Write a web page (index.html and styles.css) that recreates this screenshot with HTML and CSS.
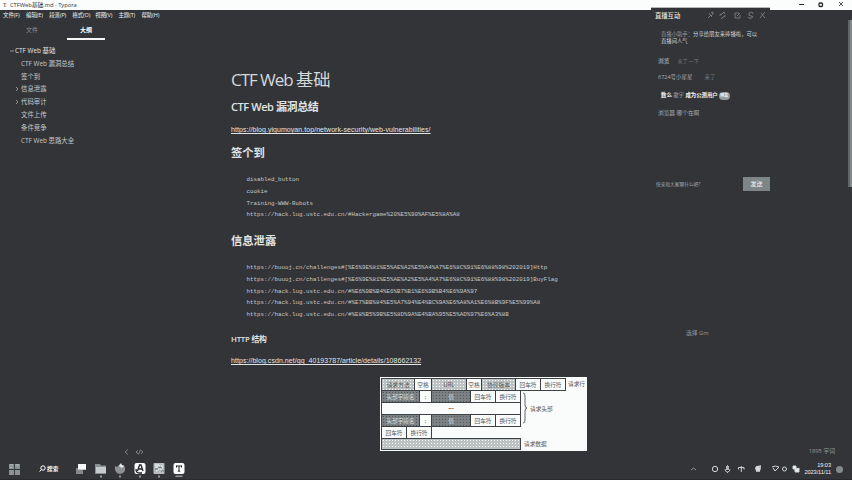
FILE: index.html
```html
<!DOCTYPE html>
<html lang="zh-CN">
<head>
<meta charset="utf-8">
<title>CTFWeb基础.md - Typora</title>
<link rel="stylesheet" href="styles.css">
</head>
<body>
<div class="screen">
  <header class="titlebar">
    <span class="app-mark">T</span><span class="title">CTFWeb基础.md - Typora</span>
    <svg class="controls" width="60" height="10" viewBox="0 0 60 10" fill="none" stroke="#222428"><path d="M6 4.500h5"/><rect x="26" y="3" width="3.500" height="3.500" rx="1" stroke-width="1.300"/><path d="M46 2l4 4M50 2l-4 4" stroke-width=".8"/></svg>
  </header>
  <nav class="menu"><span>文件(F)</span><span>编辑(E)</span><span>段落(P)</span><span>格式(O)</span><span>视图(V)</span><span>主题(T)</span><span>帮助(H)</span></nav>
  <main class="workspace">
    <aside class="sidebar">
      <div class="tabs"><span class="tab">文件</span><span class="tab active">大纲</span></div>
      <ul class="outline">
        <li class="root"><svg class="mark" viewBox="0 0 5 5"><path d="M0 3h4"/></svg>CTF Web 基础</li>
        <li>CTF Web 漏洞总结</li>
        <li>签个到</li>
        <li class="closed"><svg class="mark" viewBox="0 0 5 5"><path d="M1 1l2 2-2 2"/></svg>信息泄露</li>
        <li class="closed"><svg class="mark" viewBox="0 0 5 5"><path d="M1 1l2 2-2 2"/></svg>代码审计</li>
        <li>文件上传</li>
        <li>条件竞争</li>
        <li>CTF Web 思路大全</li>
      </ul>
      <svg class="side-tools" width="22" height="8" viewBox="0 0 22 8"><path d="M5 1.500L2 4l3 2.500M15 2.500L13 4l2 2M18 2.500L20 4l-2 2M17.500 1.500l-2 5"/></svg>
    </aside>
    <article class="document">
      <h1>CTF Web <span>基础</span></h1>
      <h2 class="first">CTF Web 漏洞总结</h2>
      <p class="link blog"><a>https://blog.yigumoyan.top/network-security/web-vulnerabilities/</a></p>
      <h2 class="second">签个到</h2>
      <pre class="tasks">disabled_button
cookie
Training-WWW-Robots
https://hack.lug.ustc.edu.cn/#Hackergame%20%E5%90%AF%E5%8A%A8</pre>
      <h2 class="third">信息泄露</h2>
      <pre class="leaks">https://buuoj.cn/challenges#[%E6%9E%81%E5%AE%A2%E5%A4%A7%E6%8C%91%E6%88%98%202019]Http
https://buuoj.cn/challenges#[%E6%9E%81%E5%AE%A2%E5%A4%A7%E6%8C%91%E6%88%98%202019]BuyFlag
https://hack.lug.ustc.edu.cn/#%E6%9B%B4%E6%B7%B1%E6%9B%B4%E6%9A%97
https://hack.lug.ustc.edu.cn/#%E7%BB%84%E5%A7%94%E4%BC%9A%E6%A8%A1%E6%8B%9F%E5%99%A8
https://hack.lug.ustc.edu.cn/#%E8%B5%9B%E5%8D%9A%E4%BA%95%E5%AD%97%E6%A3%8B</pre>
      <h3>HTTP 结构</h3>
      <p class="link csdn"><a>https://blog.csdn.net/qq_40193787/article/details/108662132</a></p>
      <div class="diagram">
        <div class="row request"><span class="light">请求方法</span><span>空格</span><span class="light">URL</span><span>空格</span><span class="light">协议版本</span><span>回车符</span><span>换行符</span><em>请求行</em></div>
        <div class="middle">
          <div class="fields">
            <div class="row header"><span class="dark">头部字段名</span><span>:</span><span class="dark">值</span><span>回车符</span><span>换行符</span></div>
            <div class="row dots"><span>...</span></div>
            <div class="row header"><span class="dark">头部字段名</span><span>:</span><span class="dark">值</span><span>回车符</span><span>换行符</span></div>
          </div>
          <svg class="brace" width="6" height="32" viewBox="0 0 6 32"><path d="M1 1q2 0 2 3v9q0 3 2 3q-2 0-2 3v9q0 3-2 3"/></svg>
          <em>请求头部</em>
        </div>
        <div class="row blank"><span>回车符</span><span>换行符</span></div>
        <div class="row body"><span class="light"></span><em>请求数据</em></div>
      </div>
    </article>
    <div class="right">
      <span class="select">选择 Gm</span>
      <span class="count">1895 字词</span>
    </div>
    <div class="scroll"></div>
  </main>
  <footer class="taskbar">
    <svg class="start" width="11" height="11" viewBox="0 0 12 12"><path fill="#8b9293" d="M0 0h5.500v5.500H0zM6.500 0H12v5.500H6.500zM0 6.500h5.500V12H0zM6.500 6.500H12V12H6.500z"/><path d="M1 1h3M7 1h4M1 4h2" stroke="#c0c5c6"/></svg>
    <span class="search"><svg width="7" height="8" viewBox="0 0 7 8" fill="none" stroke="#fff"><circle cx="4" cy="3" r="2.200"/><path d="M2.400 4.600L.6 6.600"/></svg>搜索</span>
    <div class="apps">
      <svg viewBox="0 0 12 16"><path fill="#848a8b" d="M1 6h7v6H1z"/><path fill="#f7f9f9" d="M3 2h8v6H3z"/><path fill="#c5caca" d="M3 7h8v1H3z"/></svg>
      <svg viewBox="0 0 12 16"><path fill="#8b9192" d="M0 2h5l1 1.500h5V12H0z"/><path fill="#c6cbcb" d="M1 5h10v6H1z"/><path class="run" d="M5 13.500h2v2H5z"/></svg>
      <svg viewBox="0 0 12 16"><path fill="#8c9293" d="M1 4l2 1 3-3 2 2 2-1 1 3q1 5-5 6Q0 11 1 4z"/><path fill="#e8ebeb" d="M5 4l2-3 1 2 2 1-2 2z"/><path class="run" d="M5 13.500h2v2H5z"/></svg>
      <svg viewBox="0 0 12 16"><rect y="1" x=".5" width="11" height="11" rx="2" fill="#fafbfb"/><path d="M3.500 9l2-6h1.500L9 9M4 7h4M2 7q0 4 3 4h3" fill="none" stroke="#222428" stroke-width="1.300"/><path class="run" d="M5 13.500h2v2H5z"/></svg>
      <svg viewBox="0 0 12 16"><rect y="1" x=".5" width="11" height="11" rx="1" fill="#b7bdbe"/><path d="M2 3h4v2H2M6 5l4 5M9 3v4M3 9l3-2" fill="none" stroke="#f6f8f8"/><path d="M5 5l4 1M2 7h3M8 9h3" stroke="#626869"/><path class="run" d="M5 13.500h2v2H5z"/></svg>
      <svg viewBox="0 0 12 16"><rect y="1" x=".5" width="11" height="11" rx="2" fill="#fafbfb"/><path d="M3.500 4h5M6 4v5M4.800 9.200h2.400M3.500 3.500v2M8.500 3.500v2" stroke="#222428"/><path class="run" d="M2.500 13.500h7V15h-7z"/></svg>
    </div>
    <svg class="tray" width="112" height="12" viewBox="0 0 112 12" fill="none" stroke="#d3d7d7"><path d="M2 7l2.500-2L7 7" stroke="#8b9192"/><circle cx="26" cy="6" r="2.700"/><path d="M37.500 3v4M39.500 3v4M38.500 2v5M36 6q0 3 2.500 3T41 6M38.500 9v1" stroke-width=".8"/><path d="M49.500 4.500H55M52.300 3v6M49.500 4.500v2M55 4.500v2"/><path d="M67 4l5-1M66 5h6M66.500 6.500h5M67 8h4" stroke-width="1.300"/><path d="M83 4q3.500-2 7 0M84 5l2 3 4-4"/><circle cx="95.500" cy="6" r="2"/><path d="M104 3h3v3l3-1v4h-4V6h-2z" fill="#eef0f0"/></svg>
    <div class="clock"><span>19:03</span><span>2023/11/11</span></div>
    <i class="notice"></i>
  </footer>
  <section class="chat">
    <div class="chat-head"><b>直播互动</b>
      <svg width="62" height="9" viewBox="0 0 62 9"><path d="M2 7l3-3M3 2l3 4M5 2l2-1v2L5 5M14 5q-1-2 2-2l2-2 1 2M19 4q1 2-2 2l-2 2M33 2h-4v5h5V4M31 5l3-3M43 2q4-2 4 1M43 2q-1 3 2 3t1 2q-4 1-4-1M54 7l5-6M55 2l4 5"/></svg>
    </div>
    <p class="notice-text"><span>直播小助手：</span>分享给朋友来捧播啦，可以<br>直播间人气</p>
    <p class="msg one"><b>浏览</b><span>来了 一下</span></p>
    <p class="msg two">6724号小星星<span>来了</span></p>
    <p class="msg three">数么 <span>歌字</span> 成为公测用户<i>网友</i></p>
    <p class="msg four">浏览器 哪个在啊</p>
    <div class="reply"><span>快来和大家聊什么吧?</span><button>发送</button></div>
  </section>
</div>
</body>
</html>
```
FILE: styles.css
```css
* { box-sizing: border-box; }
body { margin: 0; background: #333438; color: #d5d9da; font-family: "Open Sans", "Noto Sans CJK SC", sans-serif; }
h1, h2, h3, p, ul, pre { margin: 0; padding: 0; }
.screen { position: relative; width: 852px; height: 480px; overflow: hidden; display: flex; flex-direction: column; background: #333438; }
.titlebar { display: flex; height: 10px; flex: none; background: #fbfdfd; color: #303236; font-size: 5.8px; line-height: 10px; letter-spacing: -.05px; }
.app-mark { width: 10px; padding-left: 3px; font-family: "Liberation Serif", serif; }
.controls { margin-left: auto; margin-right: -1px; }
.menu { display: flex; height: 10px; flex: none; gap: 5.4px; padding-left: 3px; font-size: 5.5px; line-height: 10px; color: #f0f3f3; letter-spacing: -.12px; }
.menu span { width: 17.7px; white-space: nowrap; }
.workspace { display: flex; height: 439px; flex: none; }
.sidebar { width: 210px; display: flex; flex-direction: column; }
.tabs { display: flex; padding-left: 13px; }
.tab { width: 38px; height: 20px; margin-right: 16px; text-align: center; font-size: 6px; line-height: 21px; color: #8c9293; }
.tab.active { color: #fff; font-weight: 700; border-bottom: 2px solid #f5f7f7; }
.outline { list-style: none; padding-top: 5px; font-size: 6.4px; line-height: 12.8px; color: #c3c8c9; }
.outline li { height: 12.8px; padding-left: 21px; white-space: nowrap; }
.outline .root { padding-left: 10px; color: #e3e6e6; }
.outline .closed { padding-left: 15px; }
.mark { width: 5px; height: 5px; margin-right: 1px; fill: none; stroke: #a5aaab; stroke-width: .8; }
.outline .root .mark { margin-right: 0; }
.side-tools { margin: auto 0 3px 123px; fill: none; stroke: #8e9495; stroke-width: .8; }
.document { width: 440px; padding: 45px 0 0 21px; overflow: hidden; }
h1 { height: 30px; font-size: 17px; line-height: 29px; font-weight: 400; letter-spacing: -1.05px; white-space: nowrap; }
h1 span { font-size: 17.3px; letter-spacing: 0; }
h2 { font-size: 11.3px; font-weight: 700; color: #e0e4e4; white-space: nowrap; }
h2.first { height: 24px; line-height: 24px; font-size: 11px; letter-spacing: -.42px; font-weight: 600; }
.link { height: 20px; font: 7px/21px "Liberation Sans", sans-serif; }
.link a { color: #e1e5e5; text-decoration: underline; white-space: nowrap; }
.blog { letter-spacing: .055px; }
h2.second { height: 29px; line-height: 28px; }
pre { padding-left: 15.500px; font: 5.840px/11.600px "Liberation Mono", "DejaVu Sans Mono", monospace; color: #c4c9ca; }
.tasks { height: 59px; padding-top: 6.400px; }
h2.third { height: 29px; line-height: 28px; }
.leaks { height: 72px; padding-top: 6.400px; }
h3 { height: 23px; font-size: 7.8px; line-height: 23px; letter-spacing: -.2px; color: #e0e4e4; font-weight: 600; }
.csdn { height: 26px; letter-spacing: .05px; line-height: 20px; }
.diagram { width: 207px; height: 74px; margin-left: 149px; padding: 1px; background: #fafcfc; color: #53585b; font: 5.700px/11px "Noto Sans CJK SC", sans-serif; }
.row { display: flex; height: 12px; }
.row span { flex: none; border: solid #3d4044; border-width: 1px 1px 0 0; text-align: center; white-space: nowrap; overflow: hidden; }
.row span:first-child { border-left-width: 1px; }
.diagram em { font-style: normal; padding-left: 3px; white-space: nowrap; }
.light { background: radial-gradient(#fafcfc .6px, #bcc1c1 .8px) 0 0 / 3px 3px; }
.row .dark { background: radial-gradient(#53585a .6px, #7c8284 .8px) 0 0 / 3px 3px; color: #d8dddd; }
.request span { border-bottom-width: 1px; height: 13px; }
.request span:nth-child(1) { width: 34px; }
.request span:nth-child(2) { width: 17px; }
.request span:nth-child(3) { width: 35px; }
.request span:nth-child(4) { width: 15px; }
.request span:nth-child(5) { width: 34px; }
.request span:nth-child(6) { width: 25px; }
.request span:nth-child(7) { width: 25px; }
.request em { padding-left: 2px; }
.middle { display: flex; height: 36px; align-items: center; }
.fields { width: 140px; }
.header span:nth-child(1) { width: 39px; }
.header span:nth-child(2) { width: 12px; }
.header span:nth-child(3) { width: 39px; }
.header span:nth-child(4) { width: 25px; }
.header span:nth-child(5) { width: 25px; }
.dots span { width: 140px; line-height: 7px; font-weight: 700; color: #303236; }
.brace { margin-left: 1px; fill: none; stroke: #3d4044; stroke-width: .8; }
.middle em { padding-left: 2px; }
.blank span { width: 25.500px; }
.blank span:first-child { width: 26px; }
.blank span:last-child { width: 25px; }
.fields .header:last-child, .blank { position: relative; }
.blank::after { content: ""; width: 89px; border-top: 1px solid #3d4044; }
.body span { width: 140px; height: 12px; border-bottom-width: 1px; }
.right { width: 198px; display: flex; flex-direction: column; justify-content: space-between; padding: 308px 13px 2px 36px; font-size: 5.800px; line-height: 11px; color: #92989a; }
.count { align-self: flex-end; }
.scroll { width: 4px; height: 167px; background: linear-gradient(90deg, #5f6568 2px, #858b8d 2px); }
.taskbar { display: flex; height: 21px; flex: none; align-items: center; padding: 0 9px; border-bottom: 1px solid #292a2d; background: #333438; }
.start { flex: none; }
.search { display: flex; width: 53px; margin-left: 19px; gap: 1px; align-items: center; font-size: 5.700px; line-height: 10px; font-weight: 700; color: #f2f4f4; }
.apps { display: flex; gap: 7.500px; margin-left: -18px; padding-left: 1px; padding-top: 2px; }
.apps svg { width: 12px; height: 16px; }
.run { fill: #929899; }
.tray { margin-left: auto; }
.clock { width: 30px; display: flex; flex-direction: column; text-align: right; font: 5.700px/7.500px "Liberation Sans", sans-serif; color: #edf0f0; letter-spacing: -.1px; }
.notice { width: 7px; height: 7px; margin-left: 5px; border-radius: 50%; background: #838a8c; }
.chat { position: absolute; left: 651px; top: 7px; width: 119px; height: 186px; border-top: 1px solid #b3b8b9; background: #333438; font-size: 5.700px; line-height: 7px; color: #a7acae; display: flex; flex-direction: column; }
.chat-head { display: flex; height: 22px; padding-left: 4px; line-height: 15px; align-items: flex-start; }
.chat-head b { color: #e4e7e7; font-size: 6.300px; font-weight: 500; }
.chat-head svg { margin: 3px 2px 0 auto; fill: none; stroke: #85898b; stroke-width: .8; }
.notice-text { height: 25px; padding: 1px 0 0 10px; white-space: nowrap; color: #d1d5d6; font-size: 5.350px; }
.notice-text span { color: #959a9c; }
.msg { height: 16px; padding-left: 7px; white-space: nowrap; }
.msg.one { padding-top: 3px; }
.msg.one b { font-weight: 500; }
.msg.one span { margin-left: 8px; color: #737a7c; font-size: 5px; }
.msg.two { padding-top: 3px; height: 17px; font-size: 5.500px; }
.msg.two span { margin-left: 12px; color: #737a7c; }
.msg.three { height: 18px; padding: 4px 0 0 10px; color: #f4f6f6; font-weight: 700; font-size: 5.400px; }
.msg.three span { color: #a1a6a8; font-weight: 400; }
.msg.three i { display: inline-block; width: 11px; height: 8px; margin-left: 1px; border-radius: 4px; background: #939a9c; font-size: 4px; line-height: 8px; text-align: center; font-style: normal; }
.msg.four { padding-top: 4px; }
.reply { display: flex; height: 14px; margin-top: auto; margin-bottom: 2px; align-items: center; justify-content: space-between; padding-left: 5px; font-size: 4.700px; }
.reply button { width: 27px; height: 14px; padding: 0; border: 0; background: #7e8587; color: #f7f9f9; font: 6px/14px "Noto Sans CJK SC", sans-serif; }
```
